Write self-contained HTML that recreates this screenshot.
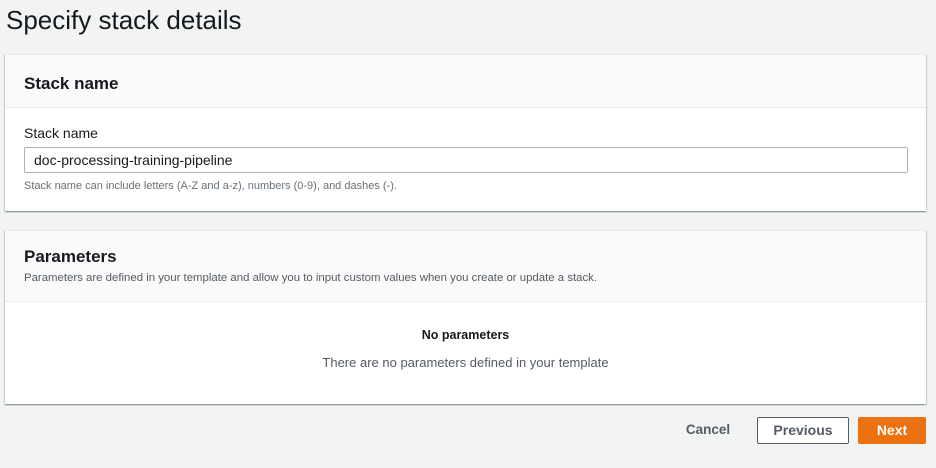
<!DOCTYPE html>
<html><head><style>
body{margin:0;width:936px;height:468px;background:#f2f3f3;font-family:"Liberation Sans",sans-serif;color:#16191f;position:relative;overflow:hidden}
.h1{position:absolute;left:6px;top:5px;font-size:26px;color:#16191f}
.panel{position:absolute;left:5px;width:921px;background:#fff;box-shadow:0 1px 1px 0 rgba(0,28,36,.3),1px 1px 1px 0 rgba(0,28,36,.15),-1px 1px 1px 0 rgba(0,28,36,.15);border-top:1px solid #eaeded}
.hd{background:#fafafa;border-bottom:1px solid #eaeded;padding:0 19px}
.t{font-size:17px;font-weight:bold}
.btn{position:absolute;top:417px;height:27px;box-sizing:border-box;font-weight:bold;font-size:14px;text-align:center;line-height:25px;border-radius:2px}
</style></head><body>
<div class="h1">Specify stack details</div>
<div class="panel" style="top:54px;height:156px">
 <div class="hd" style="height:52px"><div class="t" style="padding-top:19px">Stack name</div></div>
 <div style="position:absolute;left:19px;top:70px;font-size:14px">Stack name</div>
 <div style="position:absolute;left:19px;top:92px;width:884px;height:26px;border:1px solid #aab7b8;border-radius:2px;box-sizing:border-box;font-size:14px;line-height:24px;padding-left:9px">doc-processing-training-pipeline</div>
 <div style="position:absolute;left:19px;top:125px;font-size:11px;color:#687078">Stack name can include letters (A-Z and a-z), numbers (0-9), and dashes (-).</div>
</div>
<div class="panel" style="top:230px;height:173px">
 <div class="hd" style="height:70px"><div class="t" style="padding-top:16px">Parameters</div><div style="font-size:11.4px;color:#545b64;margin-top:5px">Parameters are defined in your template and allow you to input custom values when you create or update a stack.</div></div>
 <div style="position:absolute;left:0;width:921px;top:97px;text-align:center;font-size:12.5px;font-weight:bold">No parameters</div>
 <div style="position:absolute;left:0;width:921px;top:124px;text-align:center;font-size:13px;color:#545b64">There are no parameters defined in your template</div>
</div>
<div class="btn" style="left:673px;width:70px;color:#545b64;font-size:13.5px">Cancel</div>
<div class="btn" style="left:757px;width:92px;border:1px solid #545b64;background:#fff;color:#545b64">Previous</div>
<div class="btn" style="left:858px;width:68px;background:#ec7211;color:#fff;border:1px solid #ec7211">Next</div>
</body></html>
